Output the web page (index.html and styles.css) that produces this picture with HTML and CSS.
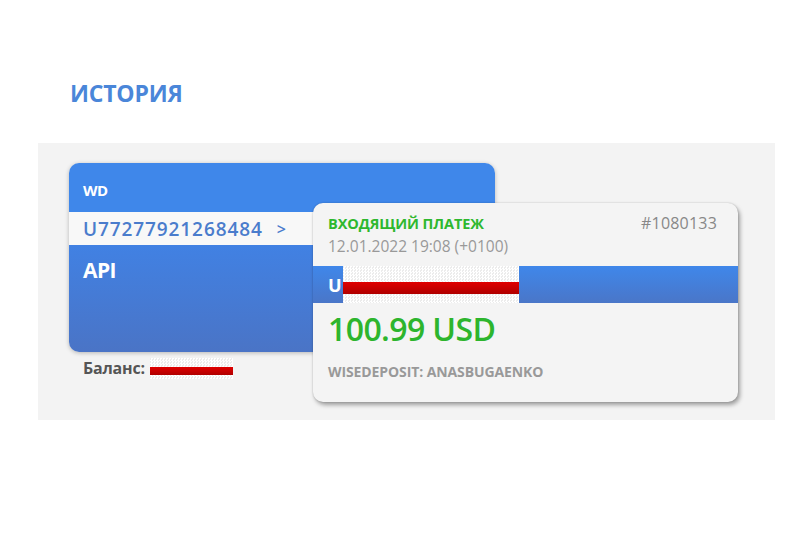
FILE: index.html
```html
<!DOCTYPE html>
<html lang="ru">
  <head>
    <meta charset="utf-8" />
    <title>История</title>
    <link rel="stylesheet" href="styles.css">
  </head>
  <body>
    <div class="history">
      <h2 class="history-title">ИСТОРИЯ</h2>

      <div class="history-panel">
        <div class="wallet">
          <div class="wallet-card">
            <div class="wallet-name">WD</div>
            <div class="wallet-number">U77277921268484 <span class="wallet-arrow">&gt;</span></div>
            <div class="wallet-body">API</div>
          </div>
          <div class="wallet-balance">
            Баланс:
            <span class="hidden-value"><span class="redact"></span></span>
          </div>
        </div>

        <!-- popup over the wallet card -->
        <div class="payment">
          <div class="payment-head">
            <span class="payment-type">ВХОДЯЩИЙ ПЛАТЕЖ</span>
            <span class="payment-id">#1080133</span>
          </div>
          <div class="payment-date">12.01.2022 19:08 (+0100)</div>
          <div class="payment-account">
            U<span class="hidden-account"><span class="redact"></span></span>
          </div>
          <div class="payment-amount">100.99 USD</div>
          <div class="payment-note">WISEDEPOSIT: ANASBUGAENKO</div>
        </div>
      </div>
    </div>
  </body>
</html>
```

FILE: styles.css
```css
body {
  margin: 0;
  background: #fff;
  font-family: "Open Sans", "DejaVu Sans", sans-serif;
}

.history {
  padding: 79px 0 0 38px;
}

.history-title {
  margin: 0 0 35px 32px;
  font-size: 23px;
  line-height: 29px;
  font-weight: 700;
  color: #4a86d9;
  letter-spacing: -0.2px;
}

.history-panel {
  position: relative;
  width: 737px;
  height: 277px;
  background: #f3f3f3;
  box-sizing: border-box;
  padding: 20px 0 0 31px;
}

/* wallet card */
.wallet-card {
  width: 426px;
  height: 189px;
  border-radius: 10px;
  overflow: hidden;
  display: flex;
  flex-direction: column;
  box-shadow: 0 1px 4px rgba(0, 0, 0, 0.25);
}

.wallet-name {
  height: 49px;
  background: #3f87ea;
  color: #fff;
  font-size: 15px;
  font-weight: 700;
  letter-spacing: -0.6px;
  padding: 5px 14px 0;
  display: flex;
  align-items: center;
  box-sizing: border-box;
}

.wallet-number {
  height: 33px;
  background: #f8f8f8;
  color: #4a7ccc;
  font-size: 19px;
  font-weight: 600;
  padding: 0 14px;
  display: flex;
  align-items: center;
  letter-spacing: 0.9px;
}

.wallet-arrow {
  margin-left: 14px;
  font-size: 16px;
}

.wallet-body {
  flex: 1;
  background: linear-gradient(#4181e3, #4a74c6);
  color: #fff;
  font-size: 21px;
  font-weight: 700;
  letter-spacing: -0.6px;
  padding: 11px 14px 0;
}

.wallet-balance {
  display: flex;
  align-items: flex-end;
  gap: 5px;
  padding-left: 14px;
  font-size: 16px;
  font-weight: 700;
  color: #555;
  height: 27px;
  letter-spacing: -0.2px;
}

.hidden-value {
  display: flex;
  align-items: flex-end;
  width: 83px;
  height: 21px;
  background: repeating-conic-gradient(#fff 0 25%, #ececec 0 50%) 0 0 / 3px 3px;
  padding-bottom: 4px;
  box-sizing: border-box;
}

.redact {
  display: block;
  width: 100%;
  height: 8px;
  background: linear-gradient(#e00000, #b00000);
}

/* payment popup */
.payment {
  position: absolute;
  left: 275px;
  top: 60px;
  width: 425px;
  height: 199px;
  background: #f4f4f4;
  border-radius: 10px;
  overflow: hidden;
  box-shadow: 2px 3px 4px rgba(0, 0, 0, 0.35), 0 0 2px rgba(0, 0, 0, 0.2);
  display: flex;
  flex-direction: column;
}

.payment-head {
  display: flex;
  justify-content: space-between;
  align-items: baseline;
  padding: 10px 21px 0 15px;
  line-height: 21px;
}

.payment-type {
  color: #2eb82e;
  font-size: 14.5px;
  font-weight: 700;
  letter-spacing: -0.1px;
}

.payment-id {
  color: #888;
  font-size: 16px;
  letter-spacing: 0.2px;
}

.payment-date {
  padding: 3px 15px 0;
  color: #999;
  font-size: 15.5px;
  line-height: 19px;
}

.payment-account {
  margin-top: 10px;
  height: 37px;
  background: linear-gradient(#3f87ea, #4a76c8);
  color: #fff;
  font-size: 18px;
  font-weight: 700;
  display: flex;
  align-items: center;
  padding-left: 15px;
}

.hidden-account {
  display: flex;
  align-items: center;
  align-self: stretch;
  width: 176px;
  margin-left: 1px;
  background: repeating-conic-gradient(#fff 0 25%, #ececec 0 50%) 0 0 / 3px 3px;
}

.hidden-account .redact {
  height: 12px;
  margin-top: 6px;
}

.payment-amount {
  padding: 6px 15px 0;
  color: #2db52d;
  font-size: 32px;
  font-weight: 600;
  line-height: 40px;
  letter-spacing: -0.6px;
}

.payment-note {
  padding: 13px 15px 0;
  color: #999;
  font-size: 14px;
  font-weight: 700;
  letter-spacing: -0.1px;
}
```
